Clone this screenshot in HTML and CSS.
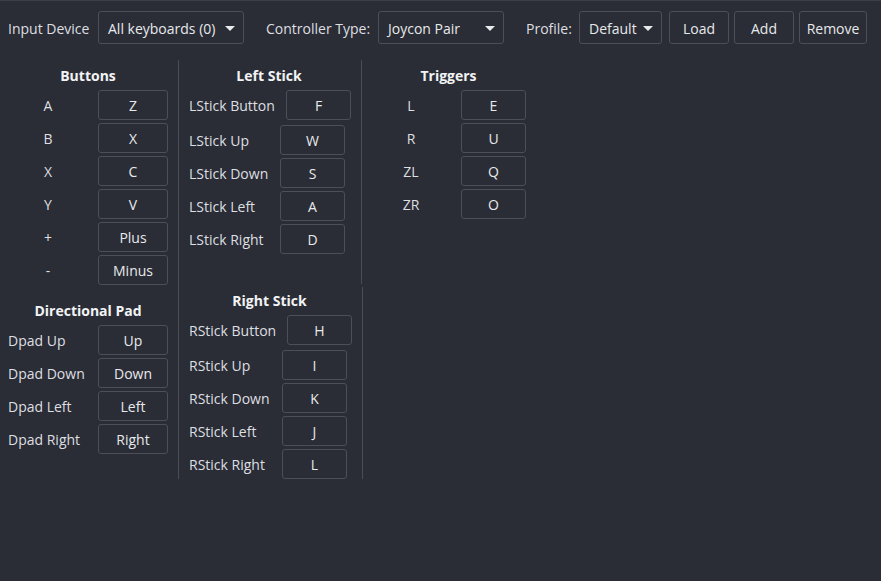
FILE: index.html
```html
<!DOCTYPE html>
<html>
<head>
<meta charset="utf-8">
<link rel="stylesheet" href="styles.css">
</head>
<body>
<div class="topline"></div>
<div class="topbar">
  <span class="lbl lbl-device">Input Device</span>
  <div class="combo combo-device"><span>All keyboards (0)</span><span class="arrow"></span></div>
  <span class="lbl lbl-ctype">Controller Type:</span>
  <div class="combo combo-ctype"><span>Joycon Pair</span><span class="arrow"></span></div>
  <span class="lbl lbl-profile">Profile:</span>
  <div class="combo combo-profile"><span>Default</span><span class="arrow"></span></div>
  <button class="btn btn-load">Load</button>
  <button class="btn btn-add">Add</button>
  <button class="btn btn-remove">Remove</button>
</div>

<div class="main">
  <div class="col col1">
    <section class="grp">
      <h3 class="head">Buttons</h3>
      <div class="rows">
        <div class="row"><span class="name center">A</span><span class="key">Z</span></div>
        <div class="row"><span class="name center">B</span><span class="key">X</span></div>
        <div class="row"><span class="name center">X</span><span class="key">C</span></div>
        <div class="row"><span class="name center">Y</span><span class="key">V</span></div>
        <div class="row"><span class="name center">+</span><span class="key">Plus</span></div>
        <div class="row"><span class="name center">-</span><span class="key">Minus</span></div>
      </div>
    </section>
    <section class="grp dpad">
      <h3 class="head">Directional Pad</h3>
      <div class="rows">
        <div class="row"><span class="name">Dpad Up</span><span class="key">Up</span></div>
        <div class="row"><span class="name">Dpad Down</span><span class="key">Down</span></div>
        <div class="row"><span class="name">Dpad Left</span><span class="key">Left</span></div>
        <div class="row"><span class="name">Dpad Right</span><span class="key">Right</span></div>
      </div>
    </section>
  </div>

  <div class="col col2">
    <section class="stick lstick">
      <h3 class="head">Left Stick</h3>
      <div class="srows">
        <div class="srow first"><span class="sname">LStick Button</span><span class="key skey">F</span></div>
        <div class="srow"><span class="sname">LStick Up</span><span class="key skey">W</span></div>
        <div class="srow"><span class="sname">LStick Down</span><span class="key skey">S</span></div>
        <div class="srow"><span class="sname">LStick Left</span><span class="key skey">A</span></div>
        <div class="srow"><span class="sname">LStick Right</span><span class="key skey">D</span></div>
      </div>
    </section>
    <section class="stick rstick">
      <h3 class="head rhead">Right Stick</h3>
      <div class="srows">
        <div class="srow first"><span class="sname">RStick Button</span><span class="key skey">H</span></div>
        <div class="srow"><span class="sname">RStick Up</span><span class="key skey">I</span></div>
        <div class="srow"><span class="sname">RStick Down</span><span class="key skey">K</span></div>
        <div class="srow"><span class="sname">RStick Left</span><span class="key skey">J</span></div>
        <div class="srow"><span class="sname">RStick Right</span><span class="key skey">L</span></div>
      </div>
    </section>
  </div>

  <div class="col col3">
    <section class="grp trig">
      <h3 class="head">Triggers</h3>
      <div class="rows">
        <div class="row"><span class="name center">L</span><span class="key tkey">E</span></div>
        <div class="row"><span class="name center">R</span><span class="key tkey">U</span></div>
        <div class="row"><span class="name center">ZL</span><span class="key tkey">Q</span></div>
        <div class="row"><span class="name center">ZR</span><span class="key tkey">O</span></div>
      </div>
    </section>
  </div>
</div>
</body>
</html>
```

FILE: styles.css
```css
* { box-sizing: border-box; }
html, body {
  margin: 0;
  padding: 0;
  background: #2a2d35;
  height: 100%;
}
body {
  font-family: "Open Sans", "Noto Sans", sans-serif;
  font-size: 14px;
  color: #dedfe2;
  overflow: hidden;
}
.topline {
  height: 1px;
  background: #3b3e46;
}
.topbar {
  display: flex;
  align-items: center;
  height: 33px;
  margin-top: 10px;
  padding-left: 8px;
}
.lbl {
  white-space: nowrap;
  flex: none;
  padding-top: 1px;
}
.lbl-device { width: 90px; }
.lbl-ctype { margin-left: 22px; width: 112px; }
.lbl-profile { margin-left: 22px; width: 53px; }

.combo {
  height: 33px;
  border: 1px solid #4c4f57;
  border-radius: 3px;
  background: #2a2d35;
  display: flex;
  align-items: center;
  justify-content: space-between;
  padding: 1px 8px 0 9px;
  color: #e8e9ec;
  flex: none;
  white-space: nowrap;
}
.combo-device { width: 146px; }
.combo-ctype { width: 126px; }
.combo-profile { width: 83px; }
.arrow {
  width: 0;
  height: 0;
  border-left: 5px solid transparent;
  border-right: 5px solid transparent;
  border-top: 5px solid #e8e9ec;
}
.btn {
  font: inherit;
  color: #e8e9ec;
  background: #2a2d35;
  border: 1px solid #4c4f57;
  border-radius: 3px;
  height: 33px;
  padding: 1px 0 0;
  flex: none;
}
.btn-load { margin-left: 7px; width: 60px; }
.btn-add { margin-left: 5px; width: 60px; }
.btn-remove { margin-left: 5px; width: 68px; }

.main {
  display: flex;
  align-items: stretch;
  margin-top: 16px;
  height: 419px;
}
.col1 {
  width: 179px;
  border-right: 1px solid #4a4d55;
  padding-left: 8px;
}
.col2 {
  width: 184px;
}
.col3 {
  padding-left: 8px;
}
.head {
  margin: 0;
  height: 30px;
  line-height: 30px;
  padding-top: 1px;
  font-size: 14px;
  font-weight: bold;
  color: #f2f3f5;
  text-align: center;
}
.grp { width: 160px; }
.rows {
  display: flex;
  flex-direction: column;
  gap: 3px;
}
.row {
  display: flex;
  align-items: center;
  gap: 10px;
}
.name {
  width: 80px;
  white-space: nowrap;
}
.name.center { text-align: center; }
.key {
  width: 70px;
  height: 30px;
  border: 1px solid #4c4f57;
  border-radius: 3px;
  display: flex;
  align-items: center;
  justify-content: center;
  color: #e8e9ec;
  flex: none;
}
.dpad { margin-top: 10px; }

.stick {
  border-right: 1px solid #4a4d55;
}
.stick .head { padding-right: 2px; }
.lstick { width: 183px; height: 224px; }
.rstick { width: 184px; height: 192px; margin-top: 3px; }
.rhead { height: 28px; line-height: 26px; }
.srows {
  display: flex;
  flex-direction: column;
  gap: 3px;
  padding-left: 10px;
}
.srow {
  display: flex;
  align-items: center;
}
.srow.first { margin-bottom: 2px; }
.sname {
  width: 91px;
  white-space: nowrap;
  flex: none;
}
.srow.first .sname { width: 97px; }
.rstick .srow.first .sname { width: 98px; }
.rstick .sname { width: 93px; }
.skey { width: 65px; }

.trig { width: 155px; }
.tkey { width: 65px; }
```
